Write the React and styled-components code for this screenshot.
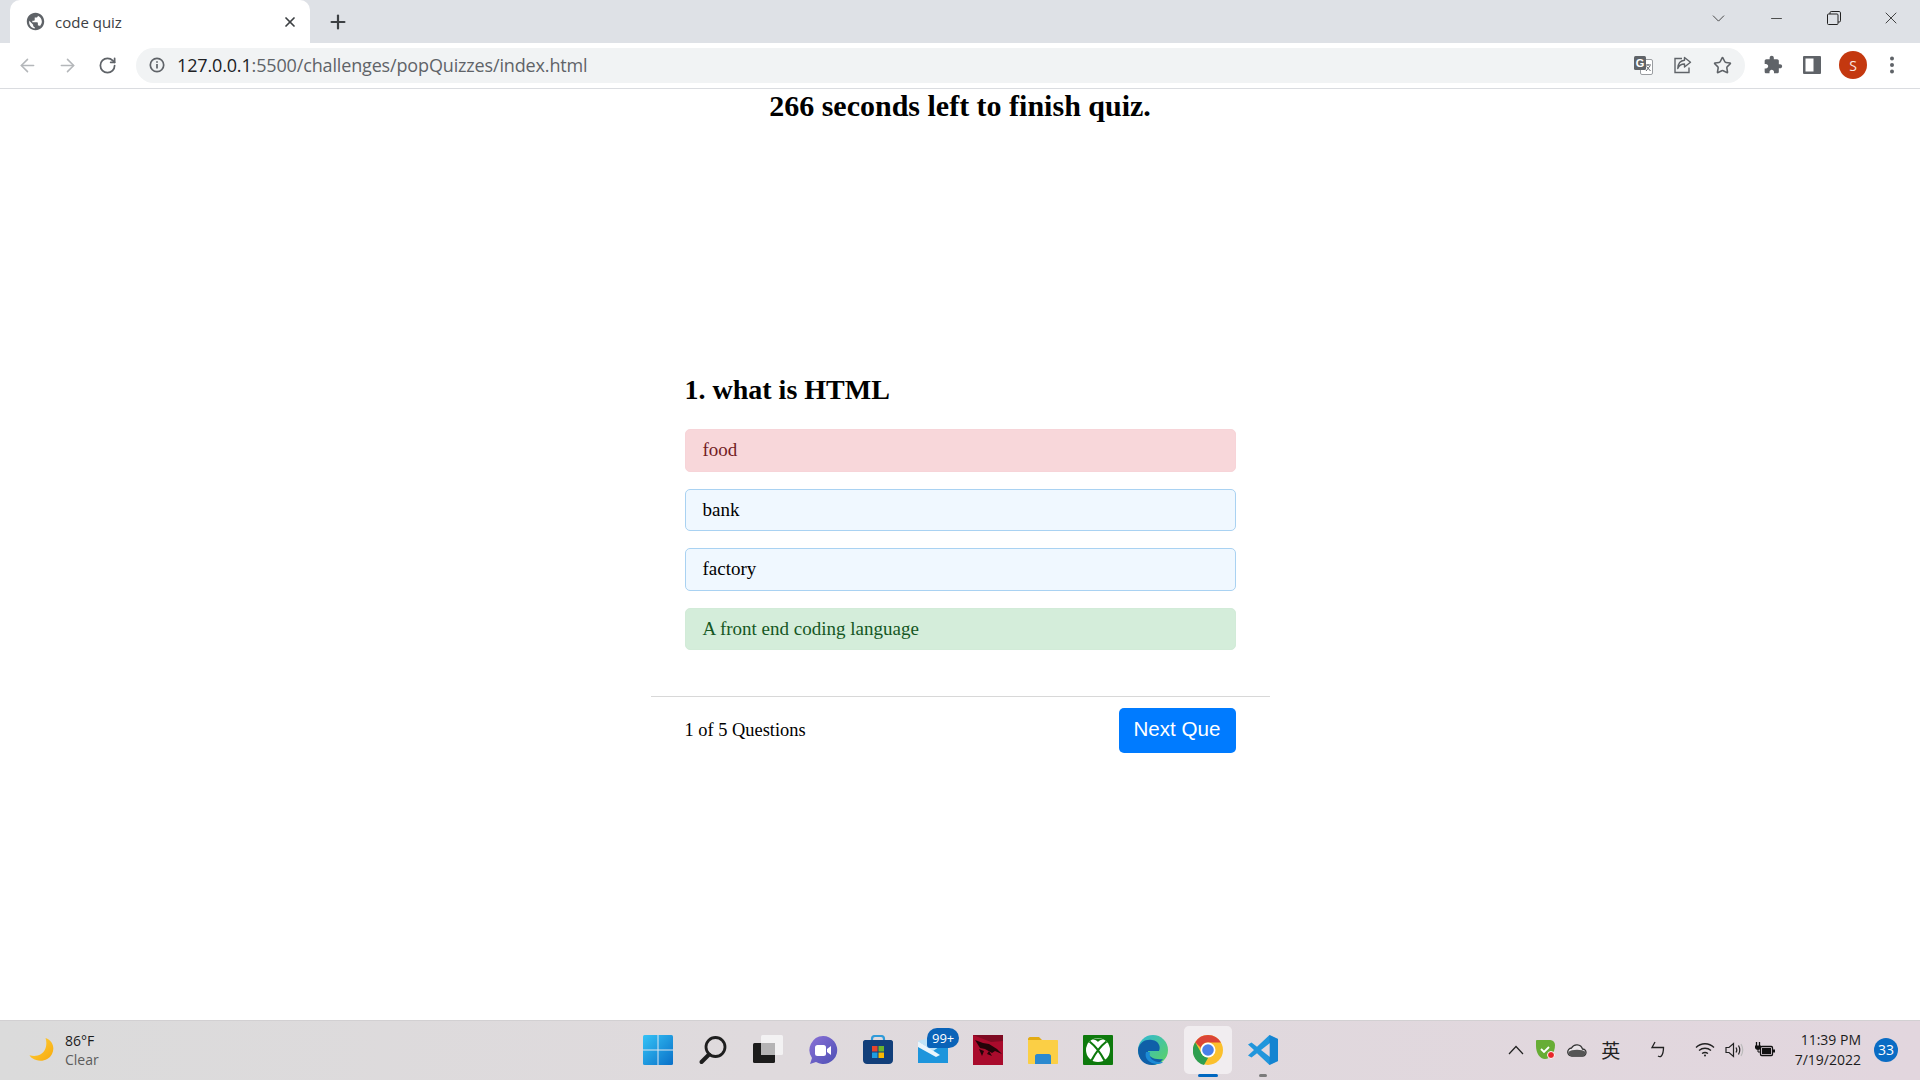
import React from "react";
import styled, { createGlobalStyle } from "styled-components";
import { ArrowLeft, ArrowRight, RotateCw, Star, Plus, X, ChevronDown, Minus } from "lucide-react";

const GlobalStyle = createGlobalStyle`
  html, body { margin: 0; padding: 0; background: #fff; }
  #root { height: 100vh; }
  * { box-sizing: border-box; }
`;

const Screen = styled.div`
  height: 1080px;
  width: 1920px;
  display: flex;
  flex-direction: column;
  overflow: hidden;
`;

/* ---------- browser chrome ---------- */
const TabStrip = styled.div`
  height: 43px;
  background: #dee1e6;
  display: flex;
  align-items: flex-end;
  padding-left: 10px;
`;
const Tab = styled.div`
  width: 300px;
  height: 43px;
  background: #fff;
  border-radius: 10px 10px 0 0;
  display: flex;
  align-items: center;
  padding: 0 12px 0 16px;
  color: #3c4043;
  font: 15px "Open Sans", sans-serif;
`;
const TabTitle = styled.span`
  flex: 1;
  margin-left: 10px;
  padding-top: 1px;
`;
const NewTab = styled.div`
  width: 28px;
  height: 43px;
  margin-left: 14px;
  display: flex;
  align-items: center;
  justify-content: center;
  color: #3c4043;
`;
const WindowControls = styled.div`
  margin-left: auto;
  height: 36px;
  align-self: flex-start;
  display: flex;
  color: #333;
`;
const WindowButton = styled.div`
  width: 57.5px;
  height: 36px;
  display: flex;
  align-items: center;
  justify-content: center;
`;
const Toolbar = styled.div`
  height: 46px;
  background: #fff;
  border-bottom: 1px solid #dadce0;
  display: flex;
  align-items: center;
  padding: 0 8px 1px 7px;
`;
const NavButton = styled.div`
  width: 40px;
  height: 34px;
  display: flex;
  align-items: center;
  justify-content: center;
  color: ${(p) => (p.$off ? "#b4b7ba" : "#5f6368")};
`;
const Omnibox = styled.div`
  width: 1609px;
  height: 35px;
  margin-left: 9px;
  margin-right: 8px;
  border-radius: 18px;
  background: #f1f3f4;
  display: flex;
  align-items: center;
  padding: 0 3px 0 13px;
`;
const Url = styled.div`
  flex: 1;
  margin-left: 12px;
  color: #5f6368;
  font: 18px "Open Sans", sans-serif;
  letter-spacing: -0.15px;
  white-space: nowrap;
`;
const UrlHost = styled.span`
  color: #202124;
`;
const BoxIcon = styled.div`
  width: 39.5px;
  height: 30px;
  display: flex;
  align-items: center;
  justify-content: center;
  color: #5f6368;
`;
const Avatar = styled.div`
  width: 28px;
  height: 28px;
  margin: 0 5px 0 7px;
  border-radius: 50%;
  background: #c4380f;
  color: #fbe9e3;
  display: flex;
  align-items: center;
  justify-content: center;
  font: 14px "Open Sans", sans-serif;
`;

/* ---------- the quiz page ---------- */
const Main = styled.main`
  flex: 1;
  background: #fff;
  color: #000;
  font-family: "Liberation Serif", "Times New Roman", serif;
  display: flex;
  flex-direction: column;
  align-items: center;
`;
const Timer = styled.h2`
  margin: 0;
  font-size: 30px;
  line-height: 34px;
  font-weight: 700;
`;
const Quiz = styled.section`
  width: 619px;
  margin-top: 250px;
`;
const QuizBody = styled.div`
  padding: 0 34px;
`;
const Question = styled.h3`
  margin: 0 0 22px;
  font-size: 28px;
  line-height: 34px;
  font-weight: 700;
`;
const Options = styled.div`
  display: flex;
  flex-direction: column;
  gap: 17px;
`;
const optionColors = {
  wrong: { bg: "#f8d7da", line: "#f7d4d8", fg: "#721c24" },
  right: { bg: "#d4edda", line: "#d2ebd8", fg: "#155724" },
  idle: { bg: "#f0f8ff", line: "#a9d2f2", fg: "#000" },
};
const Option = styled.div`
  height: 42.5px;
  padding: 0 17px;
  display: flex;
  align-items: center;
  font-size: 19px;
  border-radius: 5px;
  background: ${(p) => optionColors[p.$kind].bg};
  color: ${(p) => optionColors[p.$kind].fg};
  border: 1px solid ${(p) => optionColors[p.$kind].line};
`;
const QuizFooter = styled.div`
  margin-top: 46px;
  border-top: 1px solid #d8d8d8;
  padding: 11px 34px 0;
  display: flex;
  align-items: center;
  justify-content: space-between;
`;
const Progress = styled.span`
  font-size: 18.4px;
`;
const NextButton = styled.button`
  width: 117px;
  height: 45px;
  border: none;
  border-radius: 5px;
  background: #007bff;
  color: #fff;
  font: 20.6px "Liberation Sans", Arial, sans-serif;
  padding: 0 0 3px;
`;

/* ---------- taskbar ---------- */
const Taskbar = styled.footer`
  height: 60px;
  padding-bottom: 2px;
  background: linear-gradient(90deg, #dbdbdb 0%, #dfdadd 40%, #e2d6de 100%);
  border-top: 1px solid #d2d0d2;
  display: grid;
  grid-template-columns: 1fr 660px 1fr;
  align-items: center;
`;
const Weather = styled.div`
  display: flex;
  align-items: center;
  padding-left: 28px;
`;
const WeatherText = styled.div`
  margin-left: 11px;
  font: 14px/19px "Open Sans", sans-serif;
  color: #1c1c1c;
`;
const Muted = styled.div`
  color: #5c5c5c;
`;
const Apps = styled.div`
  display: flex;
  height: 100%;
`;
const AppSlot = styled.div`
  position: relative;
  width: 55px;
  height: 100%;
  display: flex;
  align-items: center;
  justify-content: center;
`;
const ActiveTile = styled.div`
  width: 48px;
  height: 48px;
  border-radius: 5px;
  background: #f1edf0;
  display: flex;
  align-items: center;
  justify-content: center;
`;
const RunDot = styled.div`
  position: absolute;
  bottom: 1px;
  left: 50%;
  transform: translateX(-50%);
  height: 3px;
  border-radius: 2px;
  width: ${(p) => (p.$on ? 20 : 8)}px;
  background: ${(p) => (p.$on ? "#0067c0" : "#7b7b7b")};
`;
const MailBadge = styled.div`
  position: absolute;
  top: 7px;
  left: 22px;
  height: 20px;
  padding: 0 5px;
  border-radius: 10px 10px 10px 3px;
  background: #0a63b8;
  color: #fff;
  font: 13px/20px "Open Sans", sans-serif;
`;
const Tray = styled.div`
  display: flex;
  align-items: center;
  justify-content: flex-end;
  color: #222;
`;
const TrayItem = styled.div`
  width: ${(p) => p.$w}px;
  display: flex;
  justify-content: center;
  align-items: center;
`;
const TrayGlyph = styled.span`
  font: 19px "Noto Sans CJK SC", sans-serif;
  color: #222;
`;
const Clock = styled.div`
  margin-left: 12px;
  text-align: right;
  font: 14px/20px "Open Sans", sans-serif;
  color: #1c1c1c;
`;
const Notifications = styled.div`
  width: 24px;
  height: 24px;
  margin: 0 22px 0 13px;
  border-radius: 50%;
  background: #0a6cc4;
  color: #fff;
  display: flex;
  align-items: center;
  justify-content: center;
  font: 14px "Open Sans", sans-serif;
`;

/* ---------- drawings ---------- */
const Globe = () => (
  <svg width="19" height="19" viewBox="0 0 24 24" fill="#5f6368">
    <path d="M12 1C5.900 1 1 5.900 1 12s4.900 11 11 11 11-4.900 11-11S18.100 1 12 1zm-1 19.900c-3.900-.5-7-3.900-7-7.900 0-.6.100-1.200.200-1.800L9 16v1c0 1.100.9 2 2 2v1.900zm6.900-2.500c-.3-.8-1-1.400-1.900-1.400h-1v-3c0-.6-.4-1-1-1H8v-2h2c.6 0 1-.4 1-1V7h2c1.100 0 2-.9 2-2v-.4c2.900 1.200 5 4 5 7.400 0 2.100-.8 4-2.100 5.400z" />
  </svg>
);
const RestoreIcon = () => (
  <svg width="14" height="14" viewBox="0 0 14 14" fill="none" stroke="#222" strokeWidth="1">
    <rect x="0.500" y="3" width="10.500" height="10.500" rx="1" />
    <path d="M3 3V1.700C3 1 3.500.5 4.200.5h8c.7 0 1.300.6 1.300 1.300v8c0 .7-.5 1.200-1.200 1.200H11" />
  </svg>
);
const InfoIcon = () => (
  <svg width="16" height="16" viewBox="0 0 16 16" fill="none" stroke="#5f6368">
    <circle cx="8" cy="8" r="6.700" strokeWidth="1.700" />
    <path d="M8 7v4.500M8 4.300v1.500" strokeWidth="1.700" />
  </svg>
);
const TranslateIcon = () => (
  <svg width="19" height="19" viewBox="0 0 19 19">
    <rect x="6.500" y="3.500" width="12" height="15" rx="1.500" fill="#fff" stroke="#9a9da1" />
    <path d="M11 9h6M14 8v1.500M12 15l4-5M12.500 10.500l4 4.500" stroke="#5f6368" strokeWidth="1" fill="none" />
    <rect x="0" y="0" width="12" height="14" rx="1.500" fill="#5f6368" />
    <text x="6" y="11" textAnchor="middle" fontSize="11" fontWeight="700" fontFamily="Liberation Sans" fill="#fff">G</text>
  </svg>
);
const ShareIcon = () => (
  <svg width="20" height="20" viewBox="0 0 20 20" fill="none" stroke="#5f6368" strokeWidth="1.400">
    <path d="M9 3.500H2v14h14v-5" />
    <path d="M11.500 2.500l6 4.700-6 4.800V9C8 9 6 10.500 4.800 13.500 5 9 7.500 5.600 11.500 5.300z" strokeLinejoin="round" />
  </svg>
);
const PuzzleIcon = () => (
  <svg width="20" height="20" viewBox="0 0 24 24" fill="#5f6368">
    <path d="M20.500 11H19V7c0-1.100-.9-2-2-2h-4V3.500C13 2.120 11.880 1 10.500 1S8 2.120 8 3.500V5H4c-1.100 0-1.990.9-1.990 2v3.800H3.500c1.490 0 2.700 1.210 2.700 2.700s-1.210 2.700-2.700 2.700H2V20c0 1.100.9 2 2 2h3.800v-1.500c0-1.490 1.210-2.700 2.700-2.700 1.490 0 2.700 1.210 2.700 2.700V22H17c1.100 0 2-.9 2-2v-4h1.500c1.380 0 2.500-1.120 2.500-2.500S21.880 11 20.500 11z" />
  </svg>
);
const SidePanelIcon = () => (
  <svg width="18" height="18" viewBox="0 0 18 18">
    <rect width="18" height="18" rx="1" fill="#5f6368" />
    <rect x="2.500" y="2.500" width="8" height="13" fill="#fff" />
  </svg>
);
const DotsIcon = () => (
  <svg width="6" height="18" viewBox="0 0 6 18" fill="#5f6368">
    <circle cx="3" cy="2.500" r="2" />
    <circle cx="3" cy="9" r="2" />
    <circle cx="3" cy="15.500" r="2" />
  </svg>
);
const Moon = () => (
  <svg width="26" height="26" viewBox="0 0 26 26">
    <defs>
      <linearGradient id="moon" x1="0" y1="0" x2="1" y2="1">
        <stop offset="0" stopColor="#ffd23c" />
        <stop offset="1" stopColor="#f7a90c" />
      </linearGradient>
    </defs>
    <path d="M17.500 1C25 3.500 27 11 24 17c-3.500 7-13 9-20 4-1-.7-2-1.700-2.500-2.800 7 2 13-.5 15.500-5.700 1.700-3.700 1.700-8 .5-11.500z" fill="url(#moon)" />
  </svg>
);
const StartIcon = () => (
  <svg width="30" height="30" viewBox="0 0 30 30">
    <defs>
      <linearGradient id="win" x1="0" y1="0" x2="1" y2="1">
        <stop offset="0" stopColor="#35c3f6" />
        <stop offset="1" stopColor="#0a70c8" />
      </linearGradient>
    </defs>
    <rect width="30" height="30" rx="1.500" fill="url(#win)" />
    <path d="M14.500 0h1v30h-1zM0 14.500h30v1H0z" fill="#e0e8f0" />
  </svg>
);
const SearchIcon = () => (
  <svg width="30" height="30" viewBox="0 0 30 30" fill="none" stroke="#1e1e1e">
    <circle cx="17.500" cy="12" r="9.500" strokeWidth="2.800" />
    <path d="M11 19.500L3.500 27" strokeWidth="4" strokeLinecap="round" />
  </svg>
);
const TaskViewIcon = () => (
  <svg width="30" height="30" viewBox="0 0 30 30">
    <rect x="8" y="0" width="22" height="20" rx="1.500" fill="#f3f2f3" />
    <rect x="0" y="8" width="22" height="20" rx="1.500" fill="#1c1c1c" />
    <rect x="8" y="8" width="14" height="12" fill="#b5b4b5" />
  </svg>
);
const ChatIcon = () => (
  <svg width="30" height="30" viewBox="0 0 30 30">
    <defs>
      <linearGradient id="chat" x1="0" y1="0" x2="1" y2="1">
        <stop offset="0" stopColor="#8a70d6" />
        <stop offset="1" stopColor="#4d50b5" />
      </linearGradient>
    </defs>
    <path d="M15 1a14 14 0 1 1-7 26l-6 2 2-6A14 14 0 0 1 15 1z" fill="url(#chat)" />
    <rect x="7" y="10" width="11" height="11" rx="2.500" fill="#fff" />
    <path d="M19 14l4-3v9l-4-3z" fill="#fff" />
  </svg>
);
const StoreIcon = () => (
  <svg width="30" height="30" viewBox="0 0 30 30">
    <path d="M9 6V4c0-2 1.500-3 3-3h6c1.500 0 3 1 3 3v2" fill="none" stroke="#2f9bd9" strokeWidth="2.200" />
    <path d="M2 5h26c1 0 2 1 2 2v18c0 2.500-2 4-4 4H4c-2 0-4-1.500-4-4V7c0-1 1-2 2-2z" fill="#123f7a" />
    <rect x="9" y="11" width="5.500" height="5.500" fill="#e8452c" />
    <rect x="15.500" y="11" width="5.500" height="5.500" fill="#6cb52d" />
    <rect x="9" y="17.500" width="5.500" height="5.500" fill="#1f9de0" />
    <rect x="15.500" y="17.500" width="5.500" height="5.500" fill="#fbb900" />
  </svg>
);
const MailIcon = () => (
  <svg width="30" height="30" viewBox="0 0 30 30">
    <path d="M0 6l15 9 15-9v22H0z" fill="#1d95dc" />
    <path d="M0 6l15-4 12 6-12 8z" fill="#bfe3f7" />
    <path d="M0 6l22 14-4 2L0 12z" fill="#e9f5fc" />
  </svg>
);
const DragonIcon = () => (
  <svg width="30" height="30" viewBox="0 0 30 30">
    <rect width="30" height="30" fill="#a90b2c" />
    <path d="M0 0h30v6l-12 1z" fill="#7e0a22" />
    <path d="M2 5l8 3 6 1 8 5 5 5-7-3-3 2-7-4-5-1z" fill="#230409" />
    <path d="M6 14l5 2-2 5zM16 16l3 5-5-2z" fill="#230409" />
  </svg>
);
const FolderIcon = () => (
  <svg width="30" height="30" viewBox="0 0 30 30">
    <path d="M0 4c0-1 1-2 2-2h9l3 3H0z" fill="#e3ab12" />
    <path d="M0 5h29c.6 0 1 .4 1 1v22c0 .6-.4 1-1 1H1c-.6 0-1-.4-1-1z" fill="#fbcf45" />
    <path d="M7 21c0-1 1-2 2-2h12c1 0 2 1 2 2v8H7z" fill="#2b89cf" />
  </svg>
);
const XboxIcon = () => (
  <svg width="30" height="30" viewBox="0 0 30 30">
    <rect width="30" height="30" rx="1" fill="#0e7a0d" />
    <circle cx="15" cy="15" r="12" fill="#fff" />
    <path d="M6.500 6.500C11 10 16 15 21.500 25.500M23.500 6.500C19 10 14 15 8.500 25.500" fill="none" stroke="#0e7a0d" strokeWidth="2.200" />
    <path d="M9 4.500c4 0 5 1.500 6 2.500 1-1 2-2.500 6-2.500-2-1.500-10-1.500-12 0z" fill="#0e7a0d" />
  </svg>
);
const EdgeIcon = () => (
  <svg width="30" height="30" viewBox="0 0 30 30">
    <defs>
      <linearGradient id="edgeA" x1="0" y1="0" x2="1" y2="1">
        <stop offset="0" stopColor="#2fb7d8" />
        <stop offset="1" stopColor="#5fd35f" />
      </linearGradient>
    </defs>
    <circle cx="15" cy="15" r="15" fill="url(#edgeA)" />
    <path d="M0 15C1 7 8 4 14 5c7 1 9 7 7 11H10c0 6 6 9 15 8-3 4-7 6-11 6C6 30 0 24 0 15z" fill="#0f5fa8" />
    <path d="M8 17c-2 6 3 12 12 12 2 0 4-1 5-2-8 1-15-3-13-10z" fill="#1c8bd6" />
  </svg>
);
const ChromeIcon = () => (
  <svg width="30" height="30" viewBox="0 0 30 30">
    <circle cx="15" cy="15" r="15" fill="#fbc02d" />
    <path d="M15 0a15 15 0 0 1 13 7.500H15a7.500 7.500 0 0 0-7.200 5.300L2.200 7.300A15 15 0 0 1 15 0z" fill="#db4437" />
    <path d="M2.200 7.300l6.500 11.400a7.500 7.500 0 0 0 6.600 3.800L11 30A15 15 0 0 1 2.200 7.300z" fill="#2e9e4f" />
    <circle cx="15" cy="15" r="7.500" fill="#fff" />
    <circle cx="15" cy="15" r="5.800" fill="#4a80e8" />
  </svg>
);
const VsCodeIcon = () => (
  <svg width="30" height="30" viewBox="0 0 30 30">
    <path d="M21.500 0L30 4v22l-8.500 4L9 18.200 3.500 22.500 0 20.500 6 15 0 9.500l3.500-2L9 11.800z" fill="#2196dc" />
    <path d="M22 8v14l-9-7z" fill="#e2d8de" />
    <path d="M21.500 0L30 4v22l-8.500 4z" fill="#0b78c9" opacity="0.600" />
  </svg>
);
const ChevronUp = () => (
  <svg width="16" height="10" viewBox="0 0 16 10" fill="none" stroke="#222" strokeWidth="1.200">
    <path d="M1 9l7-7.500L15 9" />
  </svg>
);
const ShieldIcon = () => (
  <svg width="21" height="21" viewBox="0 0 21 21">
    <path d="M1 2c0-.7.6-1.200 1.200-1.100h13C18 1 20 3 20 6c0 8-5 14-10 14S1 14 1 7z" fill="#67ad35" />
    <path d="M6 10l3 3 5-5" fill="none" stroke="#fff" strokeWidth="1.800" />
    <circle cx="16" cy="16" r="3.500" fill="#e8252a" stroke="#fff" />
  </svg>
);
const CloudIcon = () => (
  <svg width="20" height="14" viewBox="0 0 20 14">
    <path d="M5 13a4 4 0 0 1-.5-8A6 6 0 0 1 15.500 6 3.500 3.500 0 0 1 15.500 13z" fill="#e9e4e8" stroke="#333" strokeWidth="1.300" />
    <path d="M1.500 9c3-3 14-3 17 0 .5 2-1 4-3 4H5C3 13 1.500 11 1.500 9z" fill="#555" />
  </svg>
);
const ImeIcon = () => (
  <svg width="15" height="17" viewBox="0 0 15 17" fill="none" stroke="#222" strokeWidth="1.300">
    <path d="M5 1L2 6.500h11.500c0 4-.8 7-2.200 8.500-.8.800-2 .8-3.300 0" />
  </svg>
);
const WifiIcon = () => (
  <svg width="20" height="15" viewBox="0 0 20 15" fill="none" stroke="#222" strokeWidth="1.300">
    <path d="M1 5.500c5-5 13-5 18 0M4 8.500c3.500-3 8.500-3 12 0M7 11.500c2-1.300 4-1.300 6 0" />
    <circle cx="10" cy="13.500" r="1" fill="#222" stroke="none" />
  </svg>
);
const VolumeIcon = () => (
  <svg width="20" height="16" viewBox="0 0 20 16" fill="none" stroke="#222" strokeWidth="1.200">
    <path d="M1 5.500h3L8.500 1.500v13L4 10.500H1zM11 5.500c1 1.500 1 3.500 0 5M13.500 3.500c1.700 3 1.700 6 0 9" />
    <path d="M16 2c2.300 4 2.300 8 0 12" stroke="#bbb" />
  </svg>
);
const BatteryIcon = () => (
  <svg width="22" height="16" viewBox="0 0 22 16">
    <path d="M2.500 0v4M5.500 0v4" stroke="#111" strokeWidth="1.300" />
    <path d="M1 3.500h6v2C7 7 5.500 8 4 8S1 7 1 5.500z" fill="#111" />
    <path d="M4 8v2h3" fill="none" stroke="#111" />
    <rect x="6.500" y="4.500" width="12" height="9" rx="1.200" fill="#e2d6de" stroke="#111" strokeWidth="1.300" />
    <rect x="8" y="6" width="9" height="6" fill="#111" />
    <rect x="19" y="7.500" width="2" height="3" fill="#111" />
  </svg>
);

function App() {
  return (
    <Screen>
      <GlobalStyle />
      <TabStrip>
        <Tab>
          <Globe />
          <TabTitle>code quiz</TabTitle>
          <X size={16} strokeWidth={2.6} />
        </Tab>
        <NewTab>
          <Plus size={22} strokeWidth={2.4} />
        </NewTab>
        <WindowControls>
          <WindowButton>
            <ChevronDown size={21} strokeWidth={1} />
          </WindowButton>
          <WindowButton>
            <Minus size={17} strokeWidth={1.2} />
          </WindowButton>
          <WindowButton>
            <RestoreIcon />
          </WindowButton>
          <WindowButton>
            <X size={20} strokeWidth={1.1} />
          </WindowButton>
        </WindowControls>
      </TabStrip>
      <Toolbar>
        <NavButton $off>
          <ArrowLeft size={21} strokeWidth={1.8} />
        </NavButton>
        <NavButton $off>
          <ArrowRight size={21} strokeWidth={1.8} />
        </NavButton>
        <NavButton>
          <RotateCw size={19} strokeWidth={2.2} />
        </NavButton>
        <Omnibox>
          <InfoIcon />
          <Url>
            <UrlHost>127.0.0.1</UrlHost>:5500/challenges/popQuizzes/index.html
          </Url>
          <BoxIcon>
            <TranslateIcon />
          </BoxIcon>
          <BoxIcon>
            <ShareIcon />
          </BoxIcon>
          <BoxIcon>
            <Star size={19} strokeWidth={2} />
          </BoxIcon>
        </Omnibox>
        <BoxIcon>
          <PuzzleIcon />
        </BoxIcon>
        <BoxIcon>
          <SidePanelIcon />
        </BoxIcon>
        <Avatar>S</Avatar>
        <BoxIcon>
          <DotsIcon />
        </BoxIcon>
      </Toolbar>

      <Main>
        <Timer>266 seconds left to finish quiz.</Timer>
        <Quiz>
          <QuizBody>
            <Question>1. what is HTML</Question>
            <Options>
              <Option $kind="wrong">food</Option>
              <Option $kind="idle">bank</Option>
              <Option $kind="idle">factory</Option>
              <Option $kind="right">A front end coding language</Option>
            </Options>
          </QuizBody>
          <QuizFooter>
            <Progress>1 of 5 Questions</Progress>
            <NextButton>Next Que</NextButton>
          </QuizFooter>
        </Quiz>
      </Main>

      <Taskbar>
        <Weather>
          <Moon />
          <WeatherText>
            86°F
            <Muted>Clear</Muted>
          </WeatherText>
        </Weather>
        <Apps>
          <AppSlot><StartIcon /></AppSlot>
          <AppSlot><SearchIcon /></AppSlot>
          <AppSlot><TaskViewIcon /></AppSlot>
          <AppSlot><ChatIcon /></AppSlot>
          <AppSlot><StoreIcon /></AppSlot>
          <AppSlot>
            <MailIcon />
            <MailBadge>99+</MailBadge>
          </AppSlot>
          <AppSlot><DragonIcon /></AppSlot>
          <AppSlot><FolderIcon /></AppSlot>
          <AppSlot><XboxIcon /></AppSlot>
          <AppSlot><EdgeIcon /></AppSlot>
          <AppSlot>
            <ActiveTile><ChromeIcon /></ActiveTile>
            <RunDot $on />
          </AppSlot>
          <AppSlot>
            <VsCodeIcon />
            <RunDot />
          </AppSlot>
        </Apps>
        <Tray>
          <TrayItem $w={30}><ChevronUp /></TrayItem>
          <TrayItem $w={30}><ShieldIcon /></TrayItem>
          <TrayItem $w={32}><CloudIcon /></TrayItem>
          <TrayItem $w={36}><TrayGlyph>英</TrayGlyph></TrayItem>
          <TrayItem $w={58}><ImeIcon /></TrayItem>
          <TrayItem $w={36}><WifiIcon /></TrayItem>
          <TrayItem $w={24}><VolumeIcon /></TrayItem>
          <TrayItem $w={36}><BatteryIcon /></TrayItem>
          <Clock>
            11:39 PM
            <div>7/19/2022</div>
          </Clock>
          <Notifications>33</Notifications>
        </Tray>
      </Taskbar>
    </Screen>
  );
}

export default App;
